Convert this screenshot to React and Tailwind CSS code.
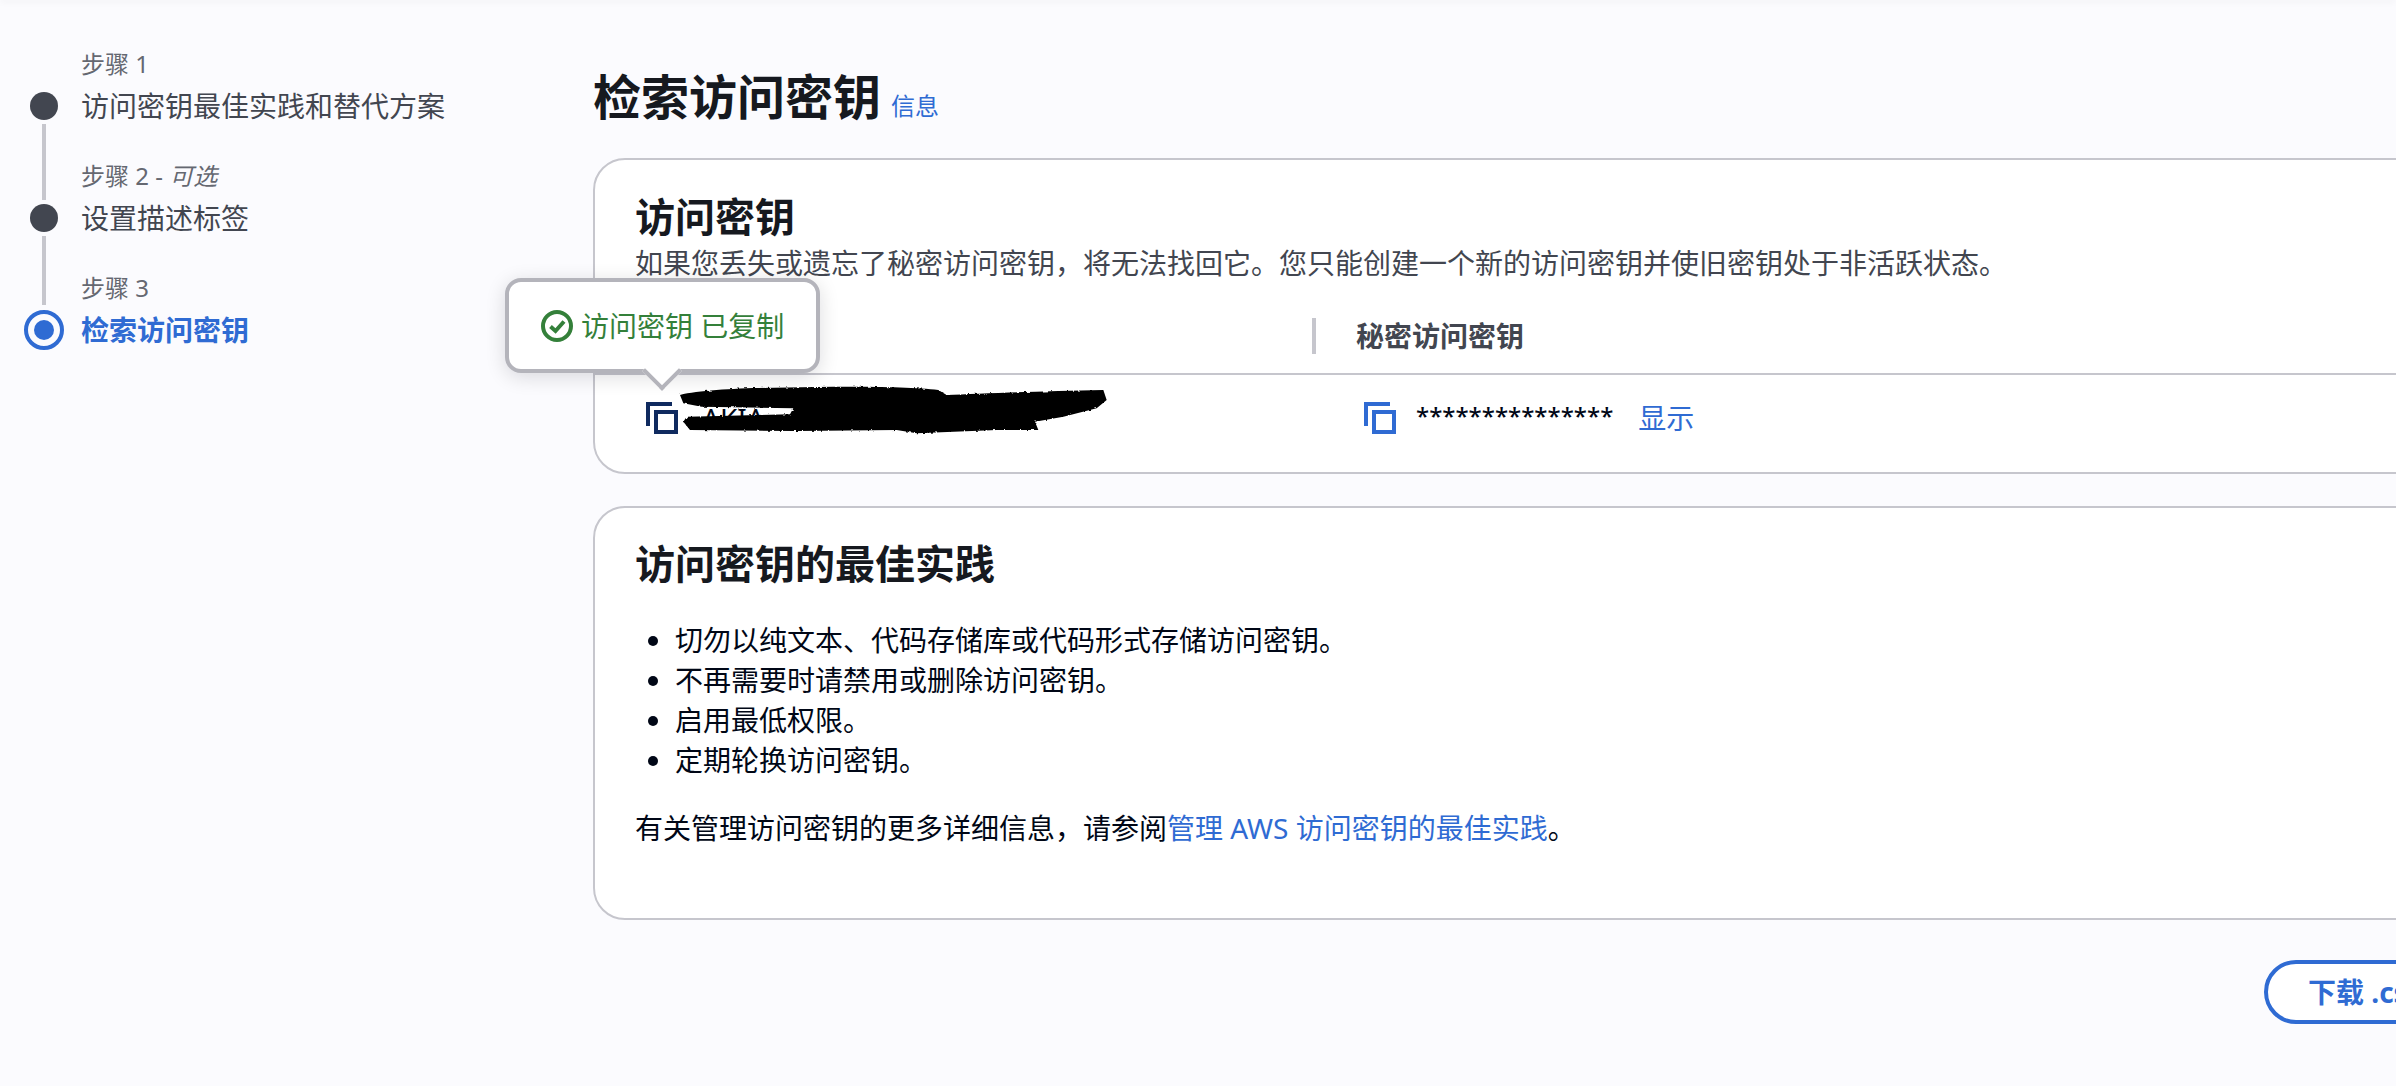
const fontStack = { fontFamily: '"Noto Sans", "Noto Sans CJK SC", sans-serif' };

const CopyIcon = ({ className }) => (
  <svg viewBox="0 0 32 32" fill="none" stroke="currentColor" strokeWidth="4" className={`w-8 h-8 shrink-0 ${className}`}>
    <path d="M2 24V2h24" />
    <rect x="10" y="10" width="20" height="20" />
  </svg>
);

const SuccessIcon = () => (
  <svg viewBox="0 0 32 32" fill="none" stroke="currentColor" strokeWidth="4" className="w-8 h-8 shrink-0">
    <circle cx="16" cy="16" r="14" />
    <path d="M9.5 16.5l5 4.5 8.5-9.5" />
  </svg>
);

const Scribble = () => (
  <svg viewBox="0 0 1470 210" className="absolute -left-[5px] top-0 w-[490px] h-[70px]">
    <defs>
      <filter id="rough" x="-5%" y="-20%" width="110%" height="140%">
        <feTurbulence type="fractalNoise" baseFrequency="0.09" numOctaves="2" seed="4" />
        <feDisplacementMap in="SourceGraphic" scale="9" />
      </filter>
    </defs>
    <path
      filter="url(#rough)"
      fill="#000"
      d="M150 60C230 40 400 38 560 36C700 34 850 36 925 45L950 60C1050 55 1250 48 1420 45L1430 75L1400 100L1300 125L1215 140L1225 165L1100 165L860 175L800 165L500 168L180 165L160 140L170 125L300 122L480 118L490 100L215 95L160 85Z"
    />
  </svg>
);

const steps = [
  { label: '步骤 1', title: '访问密钥最佳实践和替代方案' },
  { label: '步骤 2 - ', optional: '可选', title: '设置描述标签' },
  { label: '步骤 3', title: '检索访问密钥', active: true },
];

const tips = [
  '切勿以纯文本、代码存储库或代码形式存储访问密钥。',
  '不再需要时请禁用或删除访问密钥。',
  '启用最低权限。',
  '定期轮换访问密钥。',
];

const StepRail = () => (
  <div className="w-10 flex flex-col items-center pt-[92px]">
    <div className="w-7 h-7 rounded-full bg-[#424650]" />
    <div className="w-1 h-[76px] my-1 bg-[#c6c6cd]" />
    <div className="w-7 h-7 rounded-full bg-[#424650]" />
    <div className="w-1 h-[69px] mt-1 mb-[5px] bg-[#c6c6cd]" />
    <div className="w-10 h-10 rounded-full border-4 border-[#2f6bd3] flex items-center justify-center">
      <div className="w-5 h-5 rounded-full bg-[#2f6bd3]" />
    </div>
  </div>
);

const App = () => {
  return (
    <div className="relative w-[2396px] h-[1086px] overflow-hidden bg-[#fbfbfe] flex" style={fontStack}>
      {/* top bar shadow */}
      <div className="absolute top-0 left-0 w-full h-px -mt-px shadow-[0_1px_6px_rgba(0,7,22,0.15)]" />

      {/* LEFT SIDE - STEPS */}
      <nav className="w-[593px] shrink-0 flex pl-6">
        <StepRail />
        <div className="pl-[17px] pt-12">
          {steps.map((step) => (
            <div key={step.label} className="mb-[34px] last:mb-0">
              <div className="text-[24px] leading-8 text-[#656871] mb-[6px]">
                {step.label}
                {step.optional && <em>{step.optional}</em>}
              </div>
              <div className={`text-[28px] leading-10 ${step.active ? 'font-bold text-[#2f6bd3]' : 'text-[#424650]'}`}>
                {step.title}
              </div>
            </div>
          ))}
        </div>
      </nav>

      {/* RIGHT SIDE - CONTENT */}
      <main className="w-[2000px] shrink-0 pt-[65px]">
        <div className="flex items-baseline h-16 mb-[29px]">
          <h1 className="text-[48px] leading-16 font-bold text-[#16191f]">检索访问密钥</h1>
          <a className="ml-[10px] text-[24px] text-[#2f6bd3]">信息</a>
        </div>

        <section className="bg-white border-2 border-[#c6c6cd] rounded-[32px] pt-[33px]">
          <div className="px-10">
            <h2 className="text-[40px] leading-12 font-bold text-[#16191f] mb-[2px]">访问密钥</h2>
            <p className="text-[28px] leading-10 text-[#424650]">
              如果您丢失或遗忘了秘密访问密钥，将无法找回它。您只能创建一个新的访问密钥并使旧密钥处于非活跃状态。
            </p>
          </div>
          <div className="mt-[35px] pl-10 pb-[19px] border-b-2 border-[#c6c6cd] flex items-center text-[28px] font-bold text-[#424650]">
            <div className="w-[677px] leading-9">访问密钥</div>
            <div className="w-1 h-9 bg-[#c6c6cd]" />
            <div className="pl-[40px] leading-9">秘密访问密钥</div>
          </div>
          <div className="pl-10 pt-[23px] pb-[34px] flex">
            <div className="relative w-[681px] pl-[11px] flex items-center gap-6 -mt-[23px] pt-[23px]">
              <CopyIcon className="text-[#0f2a5f]" />
              <span className="text-[28px] leading-8 text-[#000716]">AKIA</span>
              <Scribble />
            </div>
            <div className="pl-12 flex items-center">
              <CopyIcon className="text-[#2f6bd3]" />
              <span className="ml-5 text-[24px] leading-8 font-medium text-[#000716] -mt-1">***************</span>
              <a className="ml-[25px] text-[28px] leading-10 text-[#2f6bd3]">显示</a>
            </div>
          </div>
        </section>

        <section className="bg-white border-2 border-[#c6c6cd] rounded-[32px] h-[414px] mt-8 px-10 pt-8">
          <h2 className="text-[40px] leading-12 font-bold text-[#16191f] mb-8">访问密钥的最佳实践</h2>
          <ul className="list-disc pl-10 text-[28px] leading-10 text-[#000716]">
            {tips.map((tip) => (
              <li key={tip}>{tip}</li>
            ))}
          </ul>
          <p className="mt-7 text-[28px] leading-10 text-[#000716]">
            有关管理访问密钥的更多详细信息，请参阅<a className="text-[#2f6bd3]">管理 AWS 访问密钥的最佳实践</a>。
          </p>
        </section>

        <div className="mt-10 ml-[1671px] flex">
          <button className="shrink-0 h-16 px-10 rounded-full border-4 border-[#2f6bd3] bg-white text-[28px] font-bold text-[#2f6bd3] whitespace-nowrap">
            下载 .csv 文件
          </button>
        </div>
      </main>

      {/* copied popover */}
      <div className="absolute left-[505px] top-[278px] w-[315px] h-[95px] bg-white border-4 border-[#b4b4bb] rounded-2xl shadow-[0_4px_20px_rgba(0,7,22,0.14)] flex items-center px-8 text-[#34803a]">
        <SuccessIcon />
        <span className="ml-2 text-[28px] leading-10 whitespace-nowrap">访问密钥 已复制</span>
        <div className="absolute left-[139px] -bottom-4 w-7 h-7 rotate-45 bg-white border-r-4 border-b-4 border-[#b4b4bb]" />
      </div>
    </div>
  );
};

export default App;
